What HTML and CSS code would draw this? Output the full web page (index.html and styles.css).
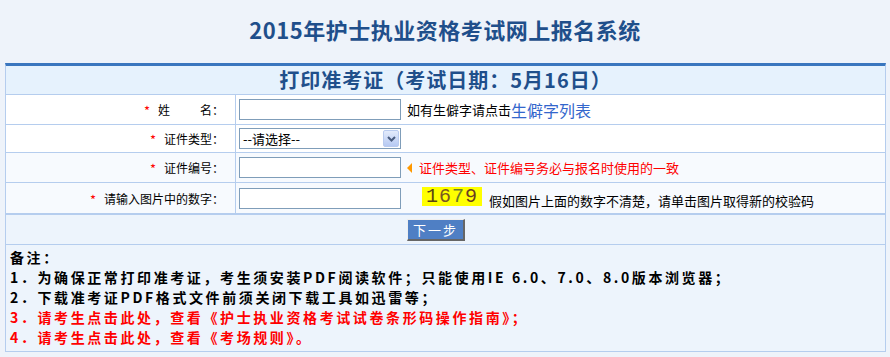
FILE: index.html
```html
<!DOCTYPE html>
<html lang="zh-CN">
<head>
<meta charset="utf-8">
<title>2015年护士执业资格考试网上报名系统</title>
<link rel="stylesheet" href="styles.css">
</head>
<body>
<h1 class="title">2015年护士执业资格考试网上报名系统</h1>
<div class="panel">
  <div class="panel-head">打印准考证（考试日期：5月16日）</div>
  <div class="form">
    <div class="label r1 white"><span class="req">*</span>姓&emsp;&emsp;&ensp;名：</div>
    <div class="field r1 white">
      <input class="text-input" type="text">
      <span class="hint">如有生僻字请点击</span><a class="link" href="#">生僻字列表</a>
    </div>

    <div class="label r2 white"><span class="req">*</span>证件类型：</div>
    <div class="field r2 white">
      <div class="select"><span>--请选择--</span><span class="select-btn"><svg width="9" height="6" viewBox="0 0 9 6"><path d="M1 1 L4.5 4.5 L8 1" fill="none" stroke="#4a5d80" stroke-width="2"/></svg></span></div>
    </div>

    <div class="label r3 tint"><span class="req">*</span>证件编号：</div>
    <div class="field r3 tint">
      <input class="text-input" type="text">
      <span class="tri"></span><span class="warn">证件类型、证件编号务必与报名时使用的一致</span>
    </div>

    <div class="label r4 tint"><span class="req">*</span>请输入图片中的数字：</div>
    <div class="field r4 tint">
      <input class="text-input" type="text">
      <span class="captcha"><span class="d1">1</span><span class="d2">6</span><span class="d3">7</span><span class="d4">9</span></span>
      <span class="cap-hint">假如图片上面的数字不清楚，请单击图片取得新的校验码</span>
    </div>
  </div>
  <div class="actions"><button class="btn" type="button">下一步</button></div>
  <div class="notes">
    <div>备注：</div>
    <div>1．为确保正常打印准考证，考生须安装PDF阅读软件；只能使用IE 6.0、7.0、8.0版本浏览器；</div>
    <div>2．下载准考证PDF格式文件前须关闭下载工具如迅雷等；</div>
    <div class="red">3．请考生点击此处，查看《护士执业资格考试试卷条形码操作指南》；</div>
    <div class="red">4．请考生点击此处，查看《考场规则》。</div>
  </div>
</div>
</body>
</html>
```

FILE: styles.css
```css
body {
  margin: 0;
  background: #eef3fa;
  font-family: "Noto Sans CJK SC", "Liberation Sans", sans-serif;
  font-size: 12px;
  color: #000;
}

.title {
  margin: 0;
  height: 63px;
  line-height: 58px;
  text-align: center;
  font-size: 22px;
  font-weight: bold;
  color: #1f4f8b;
  letter-spacing: 0.5px;
}

.panel {
  margin-left: 5px;
  width: 881px;
  box-sizing: border-box;
  border: 1px solid #b5cdee;
  border-top: 3px solid #3a76be;
}

.panel-head {
  height: 29px;
  box-sizing: border-box;
  line-height: 28px;
  text-align: center;
  background: #e6f2fd;
  font-size: 20px;
  font-weight: bold;
  color: #1f4f8b;
  letter-spacing: 1px;
  border-bottom: 1px solid #b5cdee;
}

.form {
  display: grid;
  grid-template-columns: 230px 1fr;
}

.label,
.field {
  box-sizing: border-box;
  border-bottom: 1px solid #b5cdee;
  display: flex;
  align-items: center;
}

.label {
  border-right: 1px solid #b5cdee;
  justify-content: flex-end;
  padding-right: 11px;
  font-size: 12px;
}

.field {
  padding-left: 3px;
  font-size: 13px;
}

.r1 { height: 30px; }
.r2 { height: 28px; }
.r3 { height: 30px; }
.r4 { height: 32px; border-bottom-width: 2px; }

.white { background: #fff; }
.tint { background: #f7fafe; }

.req {
  color: #ff0000;
  font-size: 13px;
  margin-right: 8px;
  position: relative;
  top: 1px;
}

.text-input {
  box-sizing: border-box;
  width: 162px;
  height: 21px;
  margin: 0;
  border: 1px solid #7f9db9;
  background: #fff;
  padding: 0 2px;
}

.hint {
  margin-left: 6px;
}

.link {
  color: #3366cc;
  font-size: 16px;
  text-decoration: none;
}

.select {
  box-sizing: border-box;
  width: 162px;
  height: 21px;
  border: 1px solid #7f9db9;
  background: #fff;
  display: flex;
  align-items: center;
  justify-content: space-between;
  padding-left: 3px;
  font-size: 13px;
}

.select-btn {
  box-sizing: border-box;
  width: 16px;
  height: 17px;
  margin-right: 1px;
  border: 1px solid #b9cbef;
  border-radius: 2px;
  background: linear-gradient(#e3ebfb, #b6c9f3);
  display: flex;
  align-items: center;
  justify-content: center;
}

.tri {
  width: 0;
  height: 0;
  margin-left: 6px;
  border-top: 5px solid transparent;
  border-bottom: 5px solid transparent;
  border-right: 5px solid #ff9900;
}

.warn {
  color: #ff0000;
  margin-left: 7px;
}

.captcha {
  width: 60px;
  height: 19px;
  margin-left: 21px;
  background: #ffff00;
  display: flex;
  align-items: center;
  justify-content: center;
  font-family: "Liberation Mono", "DejaVu Sans Mono", monospace;
  font-size: 20px;
  letter-spacing: 1px;
  position: relative;
  top: -2px;
}

.d1 { color: #5a4614; }
.d2 { color: #7a5622; }
.d3 { color: #6c7a2a; }
.d4 { color: #6a3c22; }

.cap-hint {
  margin-left: 7px;
  position: relative;
  top: 2px;
}

.actions {
  box-sizing: border-box;
  height: 30px;
  background: #edf4fc;
  border-bottom: 1px solid #b5cdee;
  display: flex;
  align-items: center;
  padding-left: 401px;
}

.btn {
  box-sizing: border-box;
  width: 58px;
  height: 22px;
  padding: 0;
  background: #4f7fc4;
  color: #fff;
  font-family: "Noto Sans CJK SC", sans-serif;
  font-size: 13px;
  letter-spacing: 2px;
  border-style: solid;
  border-width: 1px 2px 2px 1px;
  border-color: #eeeeee #666666 #666666 #eeeeee;
}

.notes {
  background: #edf4fc;
  padding: 2px 0 4px 4px;
  font-size: 14px;
  font-weight: bold;
  line-height: 20px;
  letter-spacing: 2.6px;
}

.red {
  color: #ff0000;
}
```
